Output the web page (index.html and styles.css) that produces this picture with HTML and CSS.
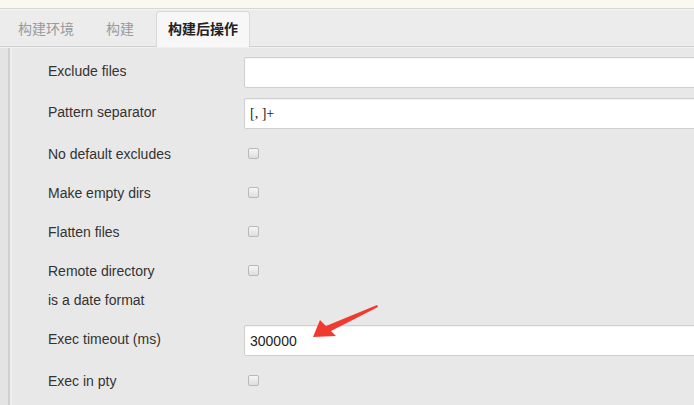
FILE: index.html
```html
<!DOCTYPE html>
<html lang="zh-CN">
  <head>
    <meta charset="UTF-8" />
    <title>构建后操作</title>
    <link rel="stylesheet" href="styles.css">
  </head>
  <body>
    <div class="topbar"></div>
    <div class="tabs">
      <span class="tab">构建环境</span>
      <span class="tab">构建</span>
      <span class="tab active">构建后操作</span>
    </div>
    <div class="panel">
      <div class="rail"></div>
      <div class="form">
        <div class="row">
          <div class="label">Exclude files</div>
          <input class="text" type="text" value="" />
        </div>
        <div class="row">
          <div class="label">Pattern separator</div>
          <input class="text serif" type="text" value="[, ]+" />
        </div>
        <div class="row check">
          <div class="label">No default excludes</div>
          <span class="box"></span>
        </div>
        <div class="row check">
          <div class="label">Make empty dirs</div>
          <span class="box"></span>
        </div>
        <div class="row check">
          <div class="label">Flatten files</div>
          <span class="box"></span>
        </div>
        <div class="row check tall">
          <div class="label">Remote directory<br />is a date format</div>
          <span class="box"></span>
        </div>
        <div class="row timeout">
          <div class="label">Exec timeout (ms)</div>
          <input class="text" type="text" value="300000" />
          <!-- 标注箭头 -->
          <svg class="arrow" width="80" height="45" viewBox="0 0 80 45">
            <polygon points="79,0 80,2 33,26 38,31 15,32 22,15 28,21" fill="#f03a30" />
          </svg>
        </div>
        <div class="row check">
          <div class="label">Exec in pty</div>
          <span class="box"></span>
        </div>
      </div>
    </div>
  </body>
</html>
```

FILE: styles.css
```css
body {
  margin: 0;
  font-family: Arial, "Liberation Sans", "Noto Sans CJK SC", sans-serif;
  font-size: 14px;
  color: #333;
  background-color: #e8e8e8;
  overflow: hidden;
}
.topbar {
  height: 8px;
  background-color: #f9f9f1;
  border-bottom: 1px solid #d6d6d6;
}
.tabs {
  display: flex;
  align-items: flex-end;
  height: 36px;
  padding-left: 8px;
  background-color: #ececec;
  border-top: 1px solid #f4f4f4;
  border-bottom: 1px solid #d0d0d0;
}
.tab {
  padding: 0 10px;
  height: 34px;
  line-height: 34px;
  color: #9a9a9a;
  margin-right: 12px;
}
.tab.active {
  padding: 0 11px;
  color: #222;
  font-weight: bold;
  background-color: #f7f7f7;
  border: 1px solid #d8d8d8;
  border-bottom: none;
  border-radius: 4px 4px 0 0;
  margin-bottom: -1px;
  height: 35px;
}
.panel {
  display: flex;
  min-height: 357px;
  border-top: 1px solid #f0f0f0;
}
.rail {
  width: 2px;
  background-color: #d0d0d0;
  border-left: 8px solid #e4e4e4;
  border-right: 2px solid #efefef;
}
.form {
  flex: 1;
  padding-top: 4px;
}
.row {
  position: relative;
  display: flex;
  align-items: flex-start;
  height: 41px;
  padding-top: 5px;
  box-sizing: border-box;
}
.label {
  width: 232px;
  padding-left: 36px;
  box-sizing: border-box;
  line-height: 28px;
  flex-shrink: 0;
}
.text {
  flex: 1;
  height: 31px;
  margin: 0 -20px 0 0;
  padding: 0 5px;
  box-sizing: border-box;
  border: 1px solid #cfcfcf;
  border-radius: 2px;
  background-color: #fff;
  font-family: Arial, "Liberation Sans", sans-serif;
  font-size: 14px;
  color: #222;
  box-shadow: inset 0 1px 1px rgba(0, 0, 0, 0.05);
}
.text.serif {
  font-family: "Liberation Serif", "Times New Roman", serif;
}
.row.check {
  height: 39px;
  padding-top: 6px;
}
.row.tall {
  height: 67px;
  padding-top: 6px;
}
.row.tall .label {
  line-height: 29px;
}
.box {
  display: block;
  width: 11px;
  height: 11px;
  margin: 8px 0 0 4px;
  border: 1px solid #b9b9b9;
  border-radius: 2px;
  background: linear-gradient(#f6f6f6, #dedede);
  box-sizing: border-box;
}
.row.timeout {
  height: 43px;
  padding-top: 7px;
}
.arrow {
  position: absolute;
  left: 286px;
  top: -13px;
}
```
